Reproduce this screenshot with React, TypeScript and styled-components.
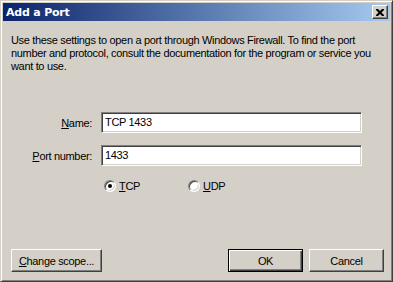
import React from "react";
import styled, { createGlobalStyle } from "styled-components";

const GlobalStyle = createGlobalStyle`
  html, body { margin: 0; padding: 0; background: #d4d0c8; }
  body { font-family: Tahoma, "Liberation Sans", Arial, sans-serif; font-size: 11px; }
`;

const Window = styled.div`
  box-sizing: border-box;
  width: 393px;
  height: 282px;
  background: #d4d0c8;
  border: 1px solid;
  border-color: #d4d0c8 #404040 #404040 #d4d0c8;
  box-shadow: inset 1px 1px #ffffff, inset -1px -1px #808080;
  padding: 2px;
  display: flex;
  flex-direction: column;
`;

const TitleBar = styled.div`
  height: 18px;
  display: flex;
  align-items: center;
  justify-content: space-between;
  padding: 0 2px 0 3px;
  background: linear-gradient(to right, #0a246a, #a6caf0);
  flex: none;
`;

const Title = styled.span`
  color: #ffffff;
  font-family: "DejaVu Sans", Verdana, sans-serif;
  font-weight: bold;
  font-size: 11px;
  letter-spacing: -0.2px;
`;

const CloseButton = styled.div`
  box-sizing: border-box;
  width: 16px;
  height: 14px;
  background: #d4d0c8;
  border: 1px solid;
  border-color: #ffffff #404040 #404040 #ffffff;
  box-shadow: inset -1px -1px #808080;
  display: flex;
  align-items: center;
  justify-content: center;
`;

const Body = styled.div`
  flex: 1;
  display: flex;
  flex-direction: column;
  padding: 13px 6px 7px 8px;
  color: #000000;
  font-family: "Liberation Sans", Arial, sans-serif;
  font-size: 11px;
  letter-spacing: -0.33px;
`;

const Intro = styled.p`
  margin: 0;
  line-height: 13px;
  white-space: nowrap;
`;

const Form = styled.div`
  display: grid;
  grid-template-columns: 81px 261px;
  column-gap: 9px;
  row-gap: 12px;
  align-items: center;
  margin-top: 39px;
`;

const Label = styled.label`
  text-align: right;
`;

const Field = styled.div`
  box-sizing: border-box;
  height: 21px;
  background: #ffffff;
  border: 1px solid;
  border-color: #808080 #ffffff #ffffff #808080;
  box-shadow: inset 1px 1px #404040, inset -1px -1px #d4d0c8;
  padding: 3px 3px 0 3px;
  line-height: 13px;
`;

const RadioRow = styled.div`
  display: flex;
  gap: 19px;
  margin: 14px 0 0 93px;
`;

const RadioOption = styled.div`
  display: flex;
  align-items: center;
  gap: 3px;
  width: 65px;
`;

const RadioCircle = styled.span<{ $checked?: boolean }>`
  box-sizing: border-box;
  width: 12px;
  height: 12px;
  border-radius: 50%;
  background: #ffffff;
  border: 1px solid;
  border-color: #808080 #ffffff #ffffff #808080;
  box-shadow: inset 1px 1px #404040, inset -1px -1px #d4d0c8;
  display: flex;
  align-items: center;
  justify-content: center;
  &::after {
    content: "";
    width: 4px;
    height: 4px;
    border-radius: 50%;
    background: #000000;
    display: ${(p) => (p.$checked ? "block" : "none")};
  }
`;

const ButtonRow = styled.div`
  margin-top: auto;
  display: flex;
  align-items: center;
  gap: 6px;
`;

const Spacer = styled.div`
  flex: 1;
`;

const Button = styled.div<{ $default?: boolean; $width: number }>`
  box-sizing: border-box;
  width: ${(p) => p.$width}px;
  height: 23px;
  display: flex;
  align-items: center;
  justify-content: center;
  background: #d4d0c8;
  border: 1px solid;
  border-color: ${(p) =>
    p.$default ? "#000000" : "#ffffff #404040 #404040 #ffffff"};
  box-shadow: ${(p) =>
    p.$default
      ? "inset 1px 1px #ffffff, inset -1px -1px #404040, inset -2px -2px #808080"
      : "inset -1px -1px #808080"};
`;

export default function App() {
  return (
    <>
      <GlobalStyle />
      <Window>
        <TitleBar>
          <Title>Add a Port</Title>
          <CloseButton>
            <svg width="8" height="7" viewBox="0 0 8 7">
              <path
                d="M0 0h2l2 2 2-2h2v1L5.5 3.5 8 6v1H6L4 5 2 7H0V6l2.5-2.5L0 1z"
                fill="#000"
              />
            </svg>
          </CloseButton>
        </TitleBar>
        <Body>
          <Intro>
            Use these settings to open a port through Windows Firewall. To find the port
            <br />
            number and protocol, consult the documentation for the program or service you
            <br />
            want to use.
          </Intro>
          <Form>
            <Label>
              <u>N</u>ame:
            </Label>
            <Field>TCP 1433</Field>
            <Label>
              <u>P</u>ort number:
            </Label>
            <Field>1433</Field>
          </Form>
          <RadioRow>
            <RadioOption>
              <RadioCircle $checked />
              <span>
                <u>T</u>CP
              </span>
            </RadioOption>
            <RadioOption>
              <RadioCircle />
              <span>
                <u>U</u>DP
              </span>
            </RadioOption>
          </RadioRow>
          <ButtonRow>
            <Button $width={91}>
              <span>
                <u>C</u>hange scope...
              </span>
            </Button>
            <Spacer />
            <Button $width={75} $default>
              OK
            </Button>
            <Button $width={75}>Cancel</Button>
          </ButtonRow>
        </Body>
      </Window>
    </>
  );
}
